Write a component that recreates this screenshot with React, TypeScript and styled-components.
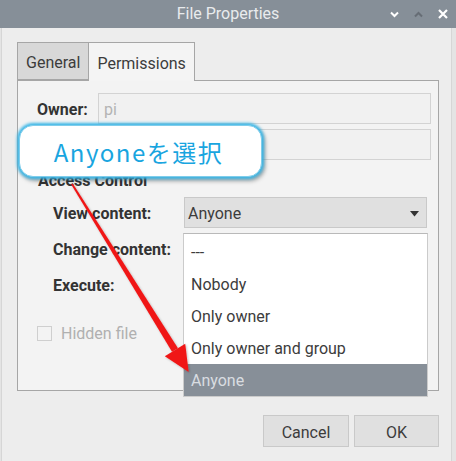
import React from 'react';
import styled, { createGlobalStyle } from 'styled-components';

const GlobalStyle = createGlobalStyle`
  html, body {
    margin: 0;
    padding: 0;
    background: #e4e4e4;
  }
  body {
    font-family: Roboto, "Liberation Sans", sans-serif;
    font-size: 16px;
    color: #3a3a3a;
  }
`;

const Page = styled.div`
  position: relative;
  width: 456px;
  height: 461px;
  overflow: hidden;
`;

const TitleBar = styled.div`
  height: 28px;
  background: #868f98;
  display: flex;
  align-items: center;
  justify-content: center;
  position: relative;
`;

const Title = styled.span`
  color: #e9ebed;
  font-size: 16px;
  line-height: 28px;
`;

const Controls = styled.div`
  position: absolute;
  right: 8px;
  top: 0;
  height: 28px;
  display: flex;
  align-items: center;
  gap: 15px;
`;

const Body = styled.div`
  margin-left: 1px;
  width: 451px;
  height: 433px;
  box-sizing: border-box;
  border-left: 1px solid #d6d6d6;
  border-right: 1px solid #d6d6d6;
  background: #ededed;
  padding: 14px 12px 0 15px;
  display: flex;
  flex-direction: column;
`;

const Notebook = styled.div`
  display: flex;
  flex-direction: column;
`;

const Tabs = styled.div`
  display: flex;
  align-items: flex-end;
  height: 38px;
`;

const Tab = styled.div<{ $active?: boolean }>`
  box-sizing: border-box;
  height: ${p => (p.$active ? '39px' : '38px')};
  margin-bottom: ${p => (p.$active ? '-1px' : '0')};
  padding: 2px 8px 0 8px;
  display: flex;
  align-items: center;
  border: 1px solid #a6a6a6;
  border-bottom: ${p => (p.$active ? 'none' : '1px solid #a6a6a6')};
  border-left: ${p => (p.$active ? 'none' : '1px solid #a6a6a6')};
  background: ${p => (p.$active ? '#f4f4f4' : '#d8d8d8')};
  color: #3c3c3c;
  position: relative;
  z-index: 1;
`;

const Pane = styled.div`
  box-sizing: border-box;
  height: 311px;
  border: 1px solid #a6a6a6;
  background: #f3f3f3;
  padding: 12px 7px 0 19px;
  display: flex;
  flex-direction: column;
`;

const OwnerGrid = styled.div`
  display: grid;
  grid-template-columns: 61px 1fr;
  grid-auto-rows: 31px;
  row-gap: 5px;
  align-items: center;
`;

const Label = styled.span`
  font-weight: bold;
  color: #333;
  white-space: nowrap;
  padding-top: 2px;
`;

const Entry = styled.div`
  box-sizing: border-box;
  height: 31px;
  border: 1px solid #d3d3d3;
  background: #f1f1f1;
  color: #b4b4b4;
  padding: 2px 0 0 5px;
  display: flex;
  align-items: center;
`;

const SectionTitle = styled.div`
  font-weight: bold;
  color: #333;
  margin-top: 12px;
  margin-left: 1px;
  height: 18px;
  line-height: 18px;
`;

const PermGrid = styled.div`
  margin-top: 7px;
  margin-left: 16px;
  display: grid;
  grid-template-columns: 131px 243px;
  grid-auto-rows: 31px;
  row-gap: 5px;
  align-items: center;
`;

const Combo = styled.div`
  box-sizing: border-box;
  height: 31px;
  border: 1px solid #c9c9c9;
  background: #e0e0e0;
  color: #3c3c3c;
  padding: 2px 7px 0 3px;
  display: flex;
  align-items: center;
  justify-content: space-between;
`;

const CheckRow = styled.div`
  margin-top: 24px;
  display: flex;
  align-items: center;
  gap: 9px;
  color: #b0b0b0;
`;

const CheckBox = styled.span`
  box-sizing: border-box;
  width: 15px;
  height: 15px;
  border: 1px solid #cfcfcf;
  background: #f3f3f3;
`;

const ButtonRow = styled.div`
  margin-top: 24px;
  display: flex;
  justify-content: flex-end;
  gap: 5px;
`;

const Button = styled.div<{ $w: number }>`
  box-sizing: border-box;
  width: ${p => p.$w}px;
  height: 32px;
  border: 1px solid #c9c9c9;
  background: #e0e0e0;
  color: #3c3c3c;
  padding-top: 2px;
  display: flex;
  align-items: center;
  justify-content: center;
`;

const Popup = styled.div`
  position: absolute;
  left: 183px;
  top: 233px;
  width: 245px;
  box-sizing: border-box;
  border: 1px solid #cbcbcb;
  border-top-color: #b9b9b9;
  background: #ffffff;
  padding-top: 2px;
  z-index: 5;
`;

const Item = styled.div<{ $selected?: boolean }>`
  height: 32px;
  padding-left: 7px;
  display: flex;
  align-items: center;
  background: ${p => (p.$selected ? '#878f98' : 'transparent')};
  color: ${p => (p.$selected ? '#d9dde1' : '#3c3c3c')};
`;

const Callout = styled.div`
  position: absolute;
  left: 19px;
  top: 125px;
  width: 243px;
  height: 52px;
  box-sizing: border-box;
  border-radius: 14px;
  background: #ffffff;
  border: 1px solid #7fcdeb;
  box-shadow: 0 0 3px 2px #3cb8e8, 2px 3px 4px 1px rgba(0, 0, 0, 0.35);
  display: flex;
  align-items: center;
  justify-content: center;
  padding-right: 4px;
  color: #19a5df;
  font-family: "Noto Sans CJK JP", "Noto Sans", sans-serif;
  font-size: 24px;
  letter-spacing: 1.5px;
  z-index: 10;
`;

const ArrowLayer = styled.svg`
  position: absolute;
  left: 0;
  top: 0;
  width: 456px;
  height: 461px;
  pointer-events: none;
  z-index: 11;
`;

const Chevron = ({ up, color }: { up?: boolean; color: string }) => (
  <svg width="9" height="7" viewBox="0 0 9 7">
    <path
      d={up ? 'M1 5.5 L4.5 2 L8 5.5' : 'M1 1.5 L4.5 5 L8 1.5'}
      fill="none"
      stroke={color}
      strokeWidth="2"
    />
  </svg>
);

const CloseIcon = () => (
  <svg width="10" height="10" viewBox="0 0 10 10">
    <path d="M1 1 L9 9 M9 1 L1 9" stroke="#ffffff" strokeWidth="2.2" />
  </svg>
);

const DropArrow = () => (
  <svg width="9" height="6" viewBox="0 0 9 6">
    <path d="M0 0 H9 L4.5 5.5 Z" fill="#333" />
  </svg>
);

const options = ['---', 'Nobody', 'Only owner', 'Only owner and group', 'Anyone'];

export default function App() {
  return (
    <Page>
      <GlobalStyle />
      <TitleBar>
        <Title>File Properties</Title>
        <Controls>
          <Chevron color="#ffffff" />
          <Chevron up color="#666d75" />
          <CloseIcon />
        </Controls>
      </TitleBar>
      <Body>
        <Notebook>
          <Tabs>
            <Tab>General</Tab>
            <Tab $active>Permissions</Tab>
          </Tabs>
          <Pane>
            <OwnerGrid>
              <Label>Owner:</Label>
              <Entry>pi</Entry>
              <Label>Group:</Label>
              <Entry>pi</Entry>
            </OwnerGrid>
            <SectionTitle>Access Control</SectionTitle>
            <PermGrid>
              <Label>View content:</Label>
              <Combo>
                Anyone
                <DropArrow />
              </Combo>
              <Label>Change content:</Label>
              <Combo>
                Anyone
                <DropArrow />
              </Combo>
              <Label>Execute:</Label>
              <Combo>
                Nobody
                <DropArrow />
              </Combo>
            </PermGrid>
            <CheckRow>
              <CheckBox />
              Hidden file
            </CheckRow>
          </Pane>
        </Notebook>
        <ButtonRow>
          <Button $w={86}>Cancel</Button>
          <Button $w={85}>OK</Button>
        </ButtonRow>
      </Body>

      <Popup>
        {options.map(o => (
          <Item key={o} $selected={o === 'Anyone'}>
            {o}
          </Item>
        ))}
      </Popup>

      <Callout>Anyoneを選択</Callout>

      <ArrowLayer viewBox="0 0 456 461">
        <defs>
          <filter id="sh" x="-20%" y="-20%" width="140%" height="140%">
            <feDropShadow dx="1" dy="1" stdDeviation="1" floodColor="#000" floodOpacity="0.25" />
          </filter>
        </defs>
        <g fill="#f01818" filter="url(#sh)">
          <polygon points="71.2,184.5 72.8,183.5 178,348.2 172,351.8" />
          <polygon points="164.8,356.3 185.2,343.7 188.7,372.1" />
        </g>
      </ArrowLayer>
    </Page>
  );
}
